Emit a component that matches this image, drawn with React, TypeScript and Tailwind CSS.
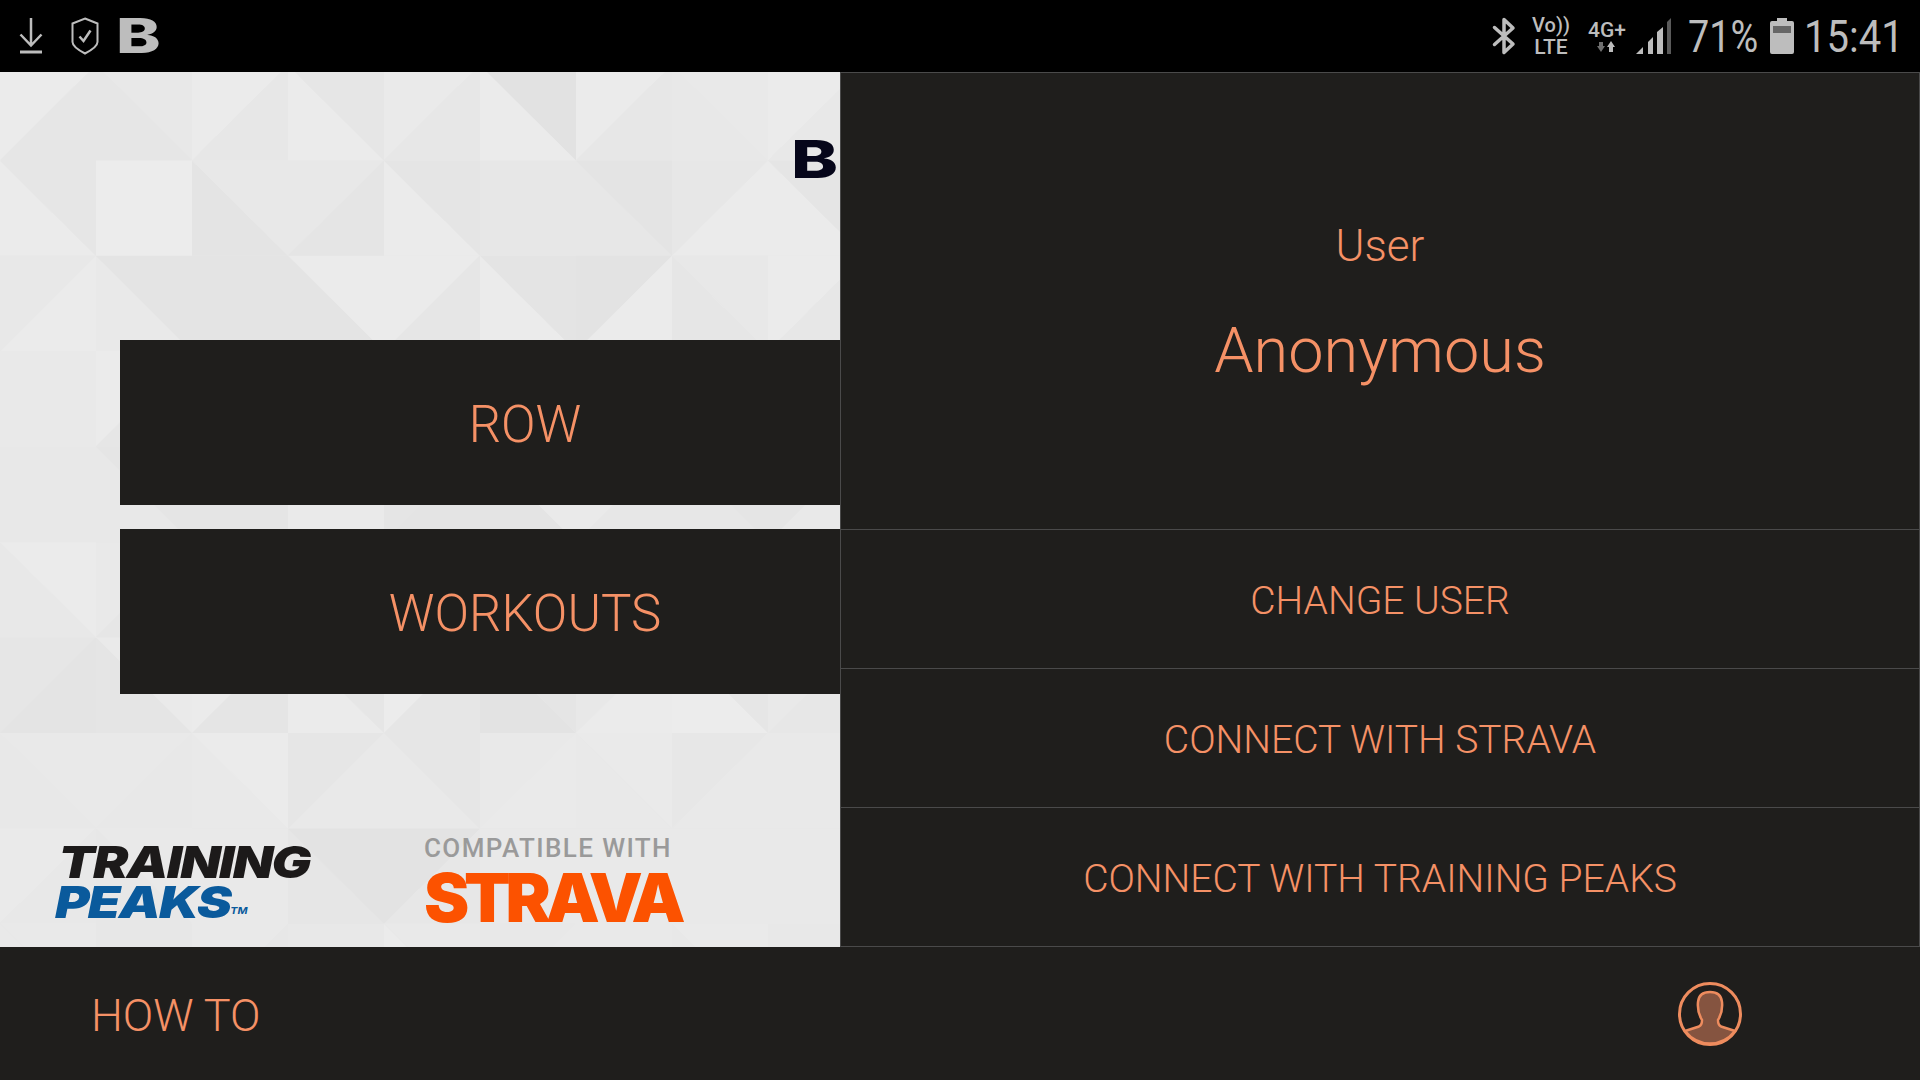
const PATTERN: string[][] = [
  ["/ebe6", "\\e6e8", "/ebe7", "\\ebe6", "/eae7", "\\ebe2", "/ebe7", "\\e8e9", "/ebe8"],
  ["\\ebe6", "-ecec", "\\e4e8", "/e8e5", "\\ebe5", "-e7e7", "\\e7e4", "/e7eb", "\\ebe5"],
  ["/e8eb", "\\e9e4", "-e4e4", "\\e4eb", "/ebe6", "\\ebe4", "/e3eb", "\\e6e8", "/ebe7"],
  ["-e9e9", "/ebe6", "-e6e6", "-e8e8", "-e8e8", "-e8e8", "-e8e8", "-e8e8", "-e8e8"],
  ["-e8e8", "\\e8e5", "-e5e5", "-eaea", "/e5e4", "\\e4ea", "/eae7", "\\e7e5", "/e5e9"],
  ["\\e8eb", "/e9e6", "-e6e6", "-e8e8", "-e8e8", "-e8e8", "-e8e8", "-e8e8", "-e8e8"],
  ["/e6e4", "\\e5ea", "/ebe5", "\\ebe6", "/ece6", "\\e3e5", "/e8eb", "\\ece6", "/e9e7"],
  ["\\e8e9", "/e9e8", "\\e9eb", "/e6e9", "\\e9e6", "/e9ea", "\\e9ea", "/e7e9", "-e9e9"],
  ["/eae8", "\\e7e9", "-e9e9", "\\e6e3", "/e3e7", "-e9e9", "-e9e9", "-e9e9", "-e9e9"],
  ["\\e9e9", "-e7e7", "/e9e7", "-e8e8", "\\ebe9", "/e8e9", "-e9e9", "\\e8ea", "-e8e8"],
];

const trianglePoints = (dir: string, c: number, r: number): [string, string] => {
  if (dir === "/") {
    return [`${c},${r + 1} ${c},${r} ${c + 1},${r}`, `${c},${r + 1} ${c + 1},${r} ${c + 1},${r + 1}`];
  }
  return [`${c},${r} ${c},${r + 1} ${c + 1},${r + 1}`, `${c},${r} ${c + 1},${r} ${c + 1},${r + 1}`];
};

const Pattern = () => (
  <svg className="absolute inset-0 h-full w-full" viewBox="0 0.073 8.75 9.17" preserveAspectRatio="none">
    {PATTERN.map((row, r) =>
      row.map((cell, c) => {
        const dir = cell[0];
        const first = `#${cell.slice(1, 3).repeat(3)}`;
        const second = `#${cell.slice(3, 5).repeat(3)}`;
        if (dir === "-") {
          return <rect key={`${r}-${c}`} x={c} y={r} width={1} height={1} fill={first} />;
        }
        const [a, b] = trianglePoints(dir, c, r);
        return (
          <g key={`${r}-${c}`}>
            <polygon points={a} fill={first} />
            <polygon points={b} fill={second} />
          </g>
        );
      }),
    )}
  </svg>
);

const StatusBar = () => (
  <div className="flex h-[72px] items-center justify-between bg-black text-[#bdbdbd]">
    <div className="flex items-center pl-[19px]">
      <svg width="24" height="36" viewBox="0 0 24 36" fill="none" stroke="currentColor">
        <path d="M12 0V28M1.500 16.500L12 27.500L22.500 16.500" strokeWidth="2.500" />
        <path d="M1 34H23" strokeWidth="3" />
      </svg>
      <svg className="ml-[28px]" width="28" height="38" viewBox="0 0 28 38" fill="none" stroke="currentColor">
        <path d="M14 1.500L26.500 6.500V25Q26.500 30 14 36.500Q1.500 30 1.500 25V6.500Z" strokeWidth="2" />
        <path d="M8.500 19.500L12.500 24L19.500 13.500" strokeWidth="2.500" />
      </svg>
      <span className="ml-[17px] w-[40px] origin-left scale-x-[1.4] font-['Inter',sans-serif] text-[48px] leading-none font-extrabold">B</span>
    </div>
    <div className="flex items-center pr-[22px]">
      <svg width="24" height="38" viewBox="0 0 24 38" fill="none" stroke="currentColor" strokeWidth="3.500" strokeLinecap="round" strokeLinejoin="round">
        <path d="M2.500 10.500L21 27L12 35.500V2.500L21 11L2.500 27.500" />
      </svg>
      <div className="ml-[17px] flex w-[36px] flex-col items-center font-medium">
        <span className="text-[20px] leading-[22px]">Vo))</span>
        <span className="text-[21px] leading-[22px]">LTE</span>
      </div>
      <div className="ml-[19px] flex w-[38px] flex-col items-center">
        <span className="text-[21px] leading-[20px] font-medium">4G+</span>
        <svg width="24" height="12" viewBox="0 0 24 12" className="mt-[1px]">
          <path d="M4 5H8V1H4ZM2 5L6 11L10 5Z" fill="#6f6f6f" />
          <path d="M14 11H18V6H14ZM12 6L16 0L20 6Z" fill="#bdbdbd" />
        </svg>
      </div>
      <svg className="ml-[10px]" width="36" height="37" viewBox="0 0 36 37">
        <path d="M0 36L7 29V36Z" fill="#bdbdbd" />
        <path d="M12 24L17 19V36H12Z" fill="#bdbdbd" />
        <path d="M21 14L27 9V36H21Z" fill="#bdbdbd" />
        <path d="M31 4L35 0V36H31Z" fill="#5a5a5a" />
      </svg>
      <span className="ml-[16px] w-[69px] origin-left scale-x-[0.84] text-[45px] leading-none font-normal whitespace-nowrap">71%</span>
      <svg className="ml-[13px]" width="24" height="36" viewBox="0 0 24 36">
        <path d="M7 0H17V3H22Q24 3 24 5V34Q24 36 22 36H2Q0 36 0 34V5Q0 3 2 3H7Z" fill="#bdbdbd" />
        <rect x="3" y="8" width="18" height="7" fill="#666" />
      </svg>
      <span className="ml-[10px] w-[94px] origin-left scale-x-[0.89] text-[45px] leading-none font-normal whitespace-nowrap">15:41</span>
    </div>
  </div>
);

const MenuButton = ({ label }: { label: string }) => (
  <div className="flex h-[165px] w-[720px] items-center justify-center bg-[#1f1e1c] pt-[5px] pl-[90px] text-[51px] font-light text-[#f59166]">
    {label}
  </div>
);

const LeftPanel = () => (
  <div className="relative flex w-[840px] flex-col overflow-hidden bg-[#e8e8e8]">
    <Pattern />
    <span className="absolute top-[62px] left-[791px] w-[36px] origin-left scale-x-[1.36] font-['Inter',sans-serif] text-[52px] leading-none font-extrabold text-[#06061a]">B</span>
    <div className="relative flex flex-col items-end gap-[24px] pt-[268px]">
      <MenuButton label="ROW" />
      <MenuButton label="WORKOUTS" />
    </div>
    <div className="relative mt-auto flex items-end pb-[21px] pl-[55px]">
      <div className="flex w-[369px] origin-left scale-x-[1.2] flex-col pb-[4px] font-['Inter',sans-serif] leading-none font-black italic">
        <span className="block pl-[3px] text-[44px] leading-[40px] tracking-[-1.500px] text-[#1c1a1a]">TRAINING</span>
        <span className="block text-[44px] leading-[40px] tracking-[-1.500px] text-[#0a5a9c]">
          PEAKS<sup className="text-[9px] font-bold tracking-normal">TM</sup>
        </span>
      </div>
      <div className="flex flex-col">
        <span className="block pb-[7px] font-['Roboto',sans-serif] text-[26px] leading-[26px] font-medium tracking-[1.400px] whitespace-nowrap text-[#9a9a9a]">COMPATIBLE WITH</span>
        <span className="block font-['Inter',sans-serif] text-[68px] leading-[58px] font-black tracking-[-5.200px] text-[#fc5200]">STRAVA</span>
      </div>
    </div>
  </div>
);

const ActionRow = ({ label, last = false }: { label: string; last?: boolean }) => (
  <div className={last ? "flex h-[140px] items-center justify-center border-y border-[#4a4a4a] pt-[4px]" : "flex h-[139px] items-center justify-center border-t border-[#4a4a4a] pt-[4px]"}>
    {label}
  </div>
);

const RightPanel = () => (
  <div className="flex flex-1 flex-col border-x border-t border-[#4a4a4a] text-[39px] font-light text-[#f59166]">
    <div className="flex flex-1 flex-col items-center justify-center gap-[42px] pt-[5px]">
      <span className="text-[44px] leading-[52px]">User</span>
      <span className="text-[63px] leading-[74px]">Anonymous</span>
    </div>
    <ActionRow label="CHANGE USER" />
    <ActionRow label="CONNECT WITH STRAVA" />
    <ActionRow label="CONNECT WITH TRAINING PEAKS" last />
  </div>
);

const BottomBar = () => (
  <div className="flex flex-1 items-center justify-between pr-[178px] pl-[91px] text-[#f59166]">
    <span className="pt-[4px] text-[45px] font-light">HOW TO</span>
    <svg width="64" height="64" viewBox="0 0 64 64" fill="none">
      <circle cx="32" cy="32" r="30.500" stroke="#ee8c5e" strokeWidth="3" />
      <path
        d="M7 49L21 44.500Q24 43 24 38Q19 30 20 20Q21 10 32 10Q43 10 44 20Q45 30 40 38Q40 43 43 44.500L57 49Q47 61.500 32 61.500Q17 61.500 7 49Z"
        fill="#855440"
        stroke="#ee8c5e"
        strokeWidth="2.500"
      />
    </svg>
  </div>
);

export default function App() {
  return (
    <div className="flex h-[1080px] w-[1920px] flex-col overflow-hidden bg-[#1f1e1c] font-['Roboto',sans-serif]">
      <StatusBar />
      <div className="flex h-[875px]">
        <LeftPanel />
        <RightPanel />
      </div>
      <BottomBar />
    </div>
  );
}
